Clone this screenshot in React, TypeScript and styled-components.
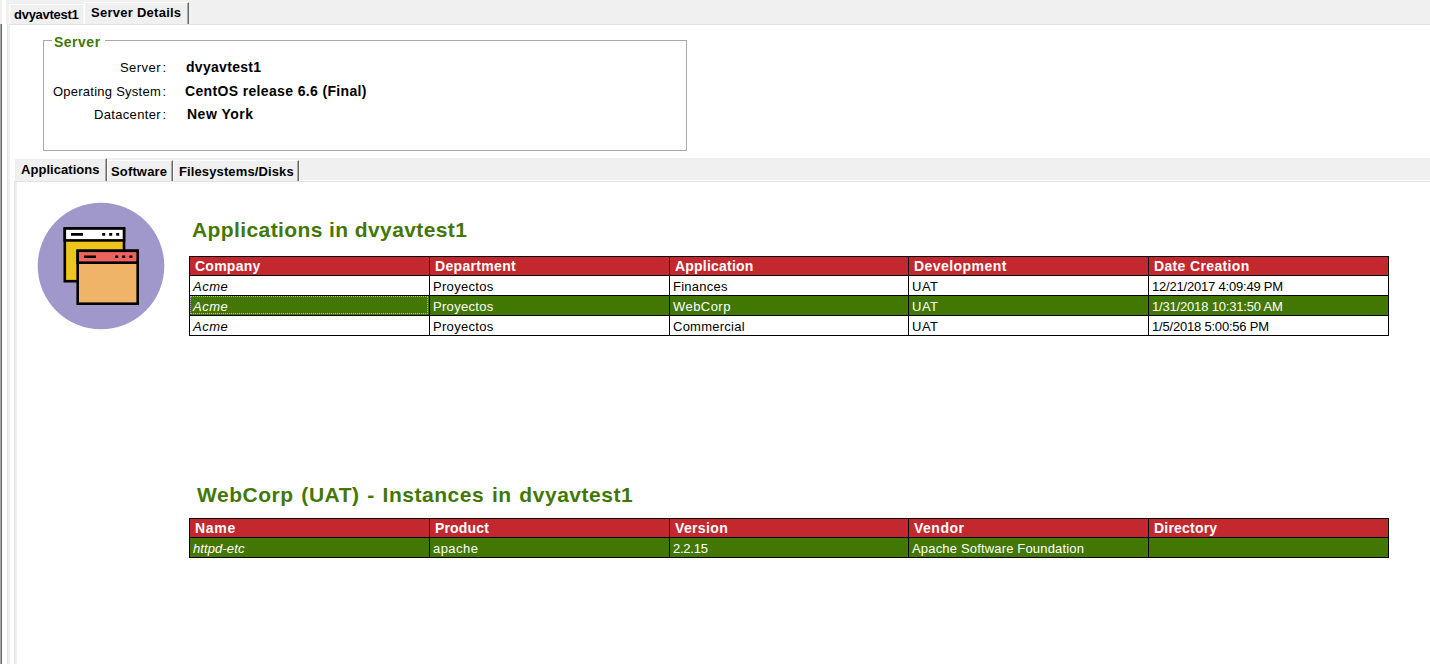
import React from "react";
import styled, { createGlobalStyle, css } from "styled-components";

const Global = createGlobalStyle`
  html, body { margin: 0; background: #fff; overflow: hidden; }
  body { font: 13px/16px "Liberation Sans", Arial, sans-serif; color: #000; }
`;

const Window = styled.div`
  display: flex;
  flex-direction: column;
  width: 1430px;
  height: 664px;
  overflow: hidden;
`;

const TopStrip = styled.div`
  display: flex;
  align-items: flex-end;
  height: 24px;
  box-sizing: border-box;
  padding-left: 9px;
  background: linear-gradient(#fff, #fff) 2px 0 / 4px 24px no-repeat, #f0f0f0;
`;

const Tab = styled.div<{ $w: number; $h: number; $pad: number; $top: number; $edge?: boolean; $track: number }>`
  box-sizing: border-box;
  width: ${(p) => p.$w}px;
  height: ${(p) => p.$h}px;
  padding: ${(p) => p.$top}px 0 0 ${(p) => p.$pad}px;
  background: #f0f0f0;
  border-top: 1px solid #fff;
  border-left: 1px solid #fff;
  border-right: ${(p) => (p.$edge ? "1px solid #696969" : "1px solid #f8f8f8")};
  ${(p) => p.$edge && css`box-shadow: inset -1px 0 #a8a8a8;`}
  font-weight: bold;
  line-height: 15px;
  letter-spacing: ${(p) => p.$track}px;
  white-space: nowrap;
`;

const Body = styled.div`
  display: flex;
  flex: 1;
  min-height: 0;
`;

const LeftFrame = styled.div`
  width: 14px;
  flex: none;
  background:
    linear-gradient(#696969, #696969) 1px 0 / 1px 100% no-repeat,
    linear-gradient(#a8a8a8, #a8a8a8) 0 0 / 1px 100% no-repeat,
    linear-gradient(#e3e3e3, #e3e3e3) 7px 0 / 1px 100% no-repeat,
    linear-gradient(#f0f0f0, #f0f0f0) 8px 0 / 2px 100% no-repeat;
`;

const Page = styled.div`
  display: flex;
  flex-direction: column;
  flex: 1;
  min-width: 0;
  border-top: 1px solid #e3e3e3;
  margin-left: -5px;
`;

const ServerBox = styled.fieldset`
  box-sizing: border-box;
  width: 644px;
  height: 117px;
  margin: 9px 0 0 34px;
  padding: 0;
  border: 1px solid #a9a9a9;
  min-width: 0;
`;

const Legend = styled.legend`
  height: 12px;
  margin-left: 8px;
  padding: 0 4px 0 2px;
  color: #437704;
  font-size: 14px;
  line-height: 16px;
  font-weight: bold;
  letter-spacing: 0.5px;
`;

const FieldList = styled.div`
  padding-top: 14px;
`;

const Field = styled.div<{ $h: number }>`
  display: flex;
  height: ${(p) => p.$h}px;
`;

const FieldLabel = styled.span<{ $track: number }>`
  display: flex;
  justify-content: flex-end;
  width: 117px;
  letter-spacing: ${(p) => p.$track}px;
  white-space: nowrap;
`;

const Colon = styled.span`
  width: 5px;
  text-align: right;
`;

const FieldValue = styled.span<{ $x: number; $track: number }>`
  margin-left: ${(p) => p.$x}px;
  font-size: 14px;
  line-height: 14px;
  font-weight: bold;
  letter-spacing: ${(p) => p.$track}px;
`;

const InnerStrip = styled.div`
  display: flex;
  align-items: flex-end;
  height: 23px;
  margin: 7px 0 0 5px;
  background: linear-gradient(#fff, #fff) 0 22px / 100% 1px no-repeat, #f0f0f0;
`;

const InnerPage = styled.div`
  display: flex;
  flex: 1;
  margin-left: 5px;
  border-left: 1px solid #e3e3e3;
  border-top: 1px solid #e3e3e3;
  box-shadow: inset 2px 0 #f0f0f0;
`;

const IconColumn = styled.div`
  width: 174px;
  flex: none;
  padding: 20px 0 0 22px;
  box-sizing: border-box;
`;

const Content = styled.div`
  width: 1200px;
  flex: none;
`;

const Heading = styled.h2<{ $top: number; $left: number; $gap: number; $track: number; $word?: number }>`
  margin: ${(p) => p.$top}px 0 ${(p) => p.$gap}px ${(p) => p.$left}px;
  color: #437704;
  font-size: 21px;
  line-height: 24px;
  font-weight: bold;
  letter-spacing: ${(p) => p.$track}px;
  word-spacing: ${(p) => p.$word ?? 0}px;
  white-space: nowrap;
`;

const Grid = styled.div`
  box-sizing: border-box;
  border-right: 1px solid #000;
  border-bottom: 1px solid #000;
`;

const Row = styled.div<{ $kind: "head" | "plain" | "selected" }>`
  display: grid;
  grid-template-columns: 240px 240px 239px 240px 240px;
  grid-template-rows: 100%;
  height: ${(p) => (p.$kind === "head" ? 19 : 20)}px;
  background: ${(p) => ({ head: "#c4282f", plain: "#fff", selected: "#437704" })[p.$kind]};
  color: ${(p) => (p.$kind === "plain" ? "#000" : "#fff")};
`;

const Cell = styled.div<{ $head?: boolean; $italic?: boolean; $focus?: boolean; $track?: number }>`
  box-sizing: border-box;
  border-top: 1px solid #000;
  border-left: 1px solid #000;
  padding-left: ${(p) => (p.$head ? 5 : 3)}px;
  font-size: ${(p) => (p.$head ? 14 : 13)}px;
  line-height: ${(p) => (p.$head ? 19 : 21)}px;
  font-weight: ${(p) => (p.$head ? "bold" : "normal")};
  font-style: ${(p) => (p.$italic ? "italic" : "normal")};
  letter-spacing: ${(p) => p.$track ?? 0}px;
  white-space: nowrap;
  ${(p) => p.$focus && css`outline: 1px dotted #c79bff; outline-offset: -2px;`}
`;

type Item = [string, number];

const Table = ({ head, rows, selected, focus }: { head: Item[]; rows: Item[][]; selected: number; focus?: boolean }) => (
  <Grid>
    <Row $kind="head">
      {head.map(([t, s]) => <Cell key={t} $head $track={s}>{t}</Cell>)}
    </Row>
    {rows.map((r, i) => (
      <Row key={i} $kind={i === selected ? "selected" : "plain"}>
        {r.map(([t, s], j) => (
          <Cell key={j} $italic={j === 0} $focus={focus && i === selected && j === 0} $track={s}>{t}</Cell>
        ))}
      </Row>
    ))}
  </Grid>
);

const IconArt = styled.svg`
  display: block;
`;

const AppsIcon = () => (
  <IconArt width="128" height="128" viewBox="37 202 128 128">
    <circle cx="101" cy="266" r="63.3" fill="#a097ca" />
    <g stroke="#000" strokeWidth="2.6">
      <rect x="64.8" y="228.5" width="59.2" height="52.7" fill="#eec41d" />
      <rect x="64.8" y="228.5" width="59.2" height="11.9" fill="#fff" />
      <rect x="77.7" y="250.8" width="60" height="52.9" fill="#f0b468" />
      <rect x="77.7" y="250.8" width="60" height="11.9" fill="#ed635e" />
    </g>
    <path d="M71 234.4h12M102.2 234.4h3M109.2 234.4h3M116.2 234.4h3M84 256.7h12M115.2 256.7h3M122.2 256.7h3M129.4 256.7h3" stroke="#000" strokeWidth="2.6" />
  </IconArt>
);

const fields = [
  { label: "Server", value: "dvyavtest1", h: 24, x: 20, ls: 0.45, vs: 0.3 },
  { label: "Operating System", value: "CentOS release 6.6 (Final)", h: 23, x: 19, ls: 0.25, vs: 0.35 },
  { label: "Datacenter", value: "New York", h: 20, x: 21, ls: 0.35, vs: 0.5 },
];

export default function App() {
  return (
    <Window>
      <Global />
      <TopStrip>
        <Tab $w={75} $h={20} $pad={4} $top={2} $track={-0.27}>dvyavtest1</Tab>
        <Tab $w={105} $h={22} $pad={6} $top={2} $track={0.26} $edge>Server Details</Tab>
      </TopStrip>
      <Body>
        <LeftFrame />
        <Page>
          <ServerBox>
            <Legend>Server</Legend>
            <FieldList>
              {fields.map((f) => (
                <Field key={f.label} $h={f.h}>
                  <FieldLabel $track={f.ls}>{f.label}</FieldLabel>
                  <Colon>:</Colon>
                  <FieldValue $x={f.x} $track={f.vs}>{f.value}</FieldValue>
                </Field>
              ))}
            </FieldList>
          </ServerBox>
          <InnerStrip>
            <Tab $w={93} $h={23} $pad={6} $top={3} $track={0.05} $edge>Applications</Tab>
            <Tab $w={66} $h={21} $pad={3} $top={3} $track={0.15} $edge>Software</Tab>
            <Tab $w={126} $h={21} $pad={5} $top={3} $track={0.12} $edge>Filesystems/Disks</Tab>
          </InnerStrip>
          <InnerPage>
            <IconColumn><AppsIcon /></IconColumn>
            <Content>
              <Heading $top={36} $left={3} $gap={14} $track={0.4}>Applications in dvyavtest1</Heading>
              <Table
                focus
                selected={1}
                head={[["Company", 0.25], ["Department", 0.32], ["Application", 0.22], ["Development", 0.45], ["Date Creation", 0.35]]}
                rows={[
                  [["Acme", 0.5], ["Proyectos", 0.3], ["Finances", 0.25], ["UAT", 0.5], ["12/21/2017 4:09:49 PM", -0.2]],
                  [["Acme", 0.5], ["Proyectos", 0.3], ["WebCorp", 0.45], ["UAT", 0.5], ["1/31/2018 10:31:50 AM", -0.18]],
                  [["Acme", 0.5], ["Proyectos", 0.3], ["Commercial", 0.25], ["UAT", 0.5], ["1/5/2018 5:00:56 PM", -0.2]],
                ]}
              />
              <Heading $top={147} $left={8} $gap={11} $track={0.53} $word={1.35}>WebCorp (UAT) - Instances in dvyavtest1</Heading>
              <Table
                selected={0}
                head={[["Name", 0.7], ["Product", 0.15], ["Version", 0.35], ["Vendor", 0.5], ["Directory", 0.2]]}
                rows={[[["httpd-etc", 0.1], ["apache", 0.45], ["2.2.15", -0.25], ["Apache Software Foundation", 0.17], ["", 0]]]}
              />
            </Content>
          </InnerPage>
        </Page>
      </Body>
    </Window>
  );
}
